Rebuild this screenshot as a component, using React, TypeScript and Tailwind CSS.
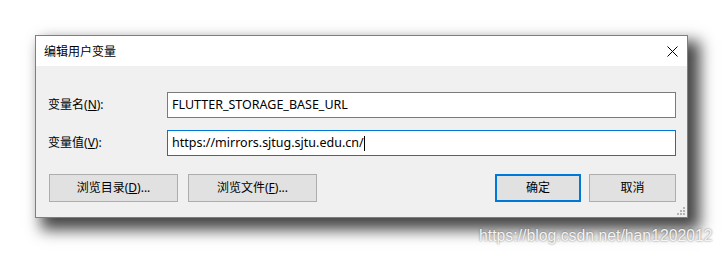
const ui = "font-['Segoe_UI','Noto_Sans','Noto_Sans_CJK_SC',sans-serif]"

const Field = ({ label, mnemonic, value, focused }: { label: string; mnemonic: string; value: string; focused?: boolean }) => (
  <div className="flex items-center h-[26px]">
    <div className="w-[131px] pl-[12px] text-[12px] text-black">
      {label}(<span className="underline">{mnemonic}</span>):
    </div>
    <div
      className={
        "flex-1 h-[26px] bg-white flex items-center pl-[4px] text-[12.5px] text-black " +
        (focused ? "border border-[#0078d7]" : "border border-[#7a7a7a]")
      }
    >
      <span>{value}</span>
      {focused && <span className="w-px h-[15px] bg-black" />}
    </div>
  </div>
)

const Btn = ({ children, w, primary }: { children: React.ReactNode; w: string; primary?: boolean }) => (
  <button
    className={
      "h-[28px] bg-[#e1e1e1] text-[12px] text-black flex items-center justify-center " +
      w +
      (primary ? " border-2 border-[#0078d7]" : " border border-[#adadad]")
    }
  >
    {children}
  </button>
)

export default function App() {
  return (
    <div className={"relative w-[723px] h-[253px] bg-white overflow-hidden " + ui}>
      <div className="pt-[35px] pl-[35px]">
        <div className="w-[653px] h-[183px] border border-[#7f7f7f] bg-[#f0f0f0] flex flex-col shadow-[9px_9px_14px_3px_rgba(0,0,0,0.72)] relative">
          {/* title bar */}
          <div className="h-[30px] bg-white flex items-center justify-between pl-[8px] pr-[9px]">
            <span className="text-[12px] text-black font-['Noto_Sans_CJK_SC',sans-serif]">编辑用户变量</span>
            <svg width="11" height="11" viewBox="0 0 11 11">
              <path d="M0.5 0.5 L10.5 10.5 M10.5 0.5 L0.5 10.5" stroke="#000" strokeWidth="1" />
            </svg>
          </div>

          {/* body */}
          <div className="flex flex-col pt-[26px] pr-[11px]">
            <div className="flex flex-col gap-[12px]">
              <Field label="变量名" mnemonic="N" value="FLUTTER_STORAGE_BASE_URL" />
              <Field label="变量值" mnemonic="V" value="https://mirrors.sjtug.sjtu.edu.cn/" focused />
            </div>

            <div className="flex items-center mt-[18px] pl-[13px]">
              <div className="flex gap-[10px]">
                <Btn w="w-[129px]">
                  浏览目录(<span className="underline">D</span>)...
                </Btn>
                <Btn w="w-[129px]">
                  浏览文件(<span className="underline">F</span>)...
                </Btn>
              </div>
              <div className="ml-auto flex gap-[8px]">
                <Btn w="w-[86px]" primary>
                  确定
                </Btn>
                <Btn w="w-[87px]">取消</Btn>
              </div>
            </div>
          </div>

          {/* resize grip */}
          <svg className="absolute right-[1px] bottom-[1px]" width="10" height="10" viewBox="0 0 10 10">
            <g fill="#b4b4b4">
              <rect x="7" y="1" width="2" height="2" />
              <rect x="4" y="4" width="2" height="2" />
              <rect x="7" y="4" width="2" height="2" />
              <rect x="1" y="7" width="2" height="2" />
              <rect x="4" y="7" width="2" height="2" />
              <rect x="7" y="7" width="2" height="2" />
            </g>
          </svg>
        </div>
      </div>

      {/* watermark */}
      <div className="absolute left-[479px] top-[224px] text-[15.8px] text-[#f4f4f4] font-['Liberation_Sans',sans-serif] [text-shadow:0_0_2px_rgba(0,0,0,0.55)]">
        https://blog.csdn.net/han1202012
      </div>
    </div>
  )
}
